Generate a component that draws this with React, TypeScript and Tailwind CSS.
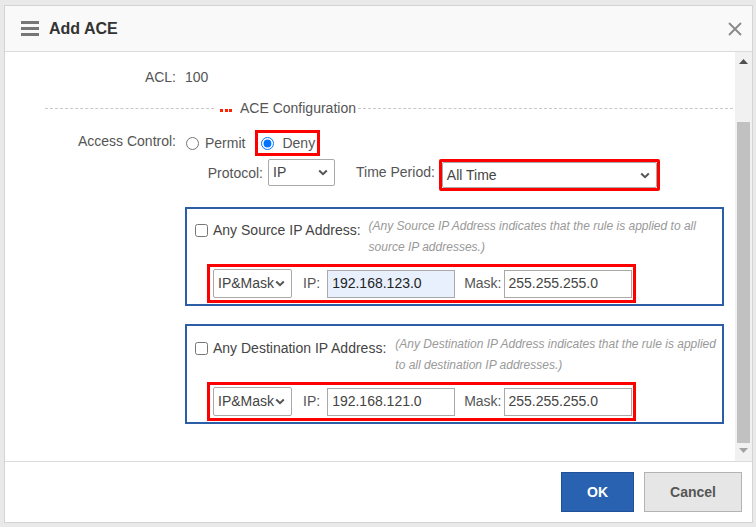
import React from "react";

const Chevron = () => (
  <svg width="10" height="7" viewBox="0 0 10 7" className="shrink-0">
    <path d="M1.2 1.5 L5 5.2 L8.8 1.5" fill="none" stroke="#555" strokeWidth="2" />
  </svg>
);

function FakeSelect({ value, className }: { value: string; className: string }) {
  return (
    <div
      className={
        "flex items-center justify-between border border-[#a9a9a9] rounded-[2px] bg-white pl-[4px] pr-[6px] text-[14px] text-[#444] " +
        className
      }
    >
      <span>{value}</span>
      <Chevron />
    </div>
  );
}

function IpBox({
  title,
  note1,
  note2,
  noteLeft,
  ip,
  autofill,
  shift,
}: {
  title: string;
  note1: string;
  note2: string;
  noteLeft: string;
  ip: string;
  autofill: boolean;
  shift: string;
}) {
  return (
    <div className={"ml-[180px] w-[539px] border-2 border-[#2c5ea8] " + shift}>
      <div className="flex items-start h-[49px]">
        <div className="flex items-center ml-[8px] mt-[11px] h-[20px]">
          <input
            type="checkbox"
            readOnly
            className="m-0 w-[13px] h-[13px] accent-[#0075ff]"
          />
          <span className="ml-[5px] text-[14px] text-[#444]">{title}</span>
        </div>
        <div
          className={
            "pt-[7px] text-[12px] leading-[21px] italic text-[#999] whitespace-nowrap " + noteLeft
          }
        >
          <div>{note1}</div>
          <div>{note2}</div>
        </div>
      </div>
      <div className="ml-[20px] mt-[6px] w-[429px] h-[39px] border-[3px] border-[#ff0000] flex items-center pl-[3px]">
        <FakeSelect value="IP&Mask" className="w-[79px] h-[29px]" />
        <span className="ml-[11px] text-[14px] text-[#555]">IP:</span>
        <div
          className={
            "ml-[7px] w-[128px] h-[28px] border border-[#a9a9a9] flex items-center pl-[4px] text-[14px] " +
            (autofill ? "bg-[#e8f0fe] text-[#222]" : "bg-white text-[#444]")
          }
        >
          {ip}
        </div>
        <span className="ml-[9px] text-[14px] text-[#555]">Mask:</span>
        <div className="ml-[3px] w-[128px] h-[28px] border border-[#a9a9a9] bg-white flex items-center pl-[3px] text-[14px] text-[#444]">
          255.255.255.0
        </div>
      </div>
    </div>
  );
}

export default function App() {
  return (
    <div
      className="w-[756px] h-[527px] bg-[#e9e9e9] pt-[5px] pl-[4px] overflow-hidden"
      style={{ fontFamily: '"Liberation Sans", Arial, sans-serif' }}
    >
      <div className="w-[749px] h-[518px] border border-[#d4d4d4] bg-white flex flex-col">
        {/* Header */}
        <div className="h-[46px] shrink-0 bg-[#f9f9f9] border-b border-[#dcdcdc] flex items-center pl-[16px] pr-[10px]">
          <div className="flex flex-col gap-[3px] w-[18px]">
            <div className="h-[3px] bg-[#777]" />
            <div className="h-[3px] bg-[#777]" />
            <div className="h-[3px] bg-[#777]" />
          </div>
          <div className="ml-[10px] text-[16px] font-bold text-[#333]">Add ACE</div>
          <div className="flex-1" />
          <svg width="14" height="14" viewBox="0 0 14 14">
            <path d="M1 1 L13 13 M13 1 L1 13" stroke="#888" strokeWidth="1.8" fill="none" />
          </svg>
        </div>

        {/* Body */}
        <div className="h-[409px] shrink-0 flex">
          <div className="flex-1 text-[14px] text-[#555]">
            <div className="flex items-center h-[20px] mt-[15px]">
              <div className="w-[171px] text-right">ACL:</div>
              <div className="ml-[9px]">100</div>
            </div>

            <div className="flex items-center h-[20px] mt-[11px] ml-[40px] mr-[2px]">
              <div className="w-[169px] border-t border-dashed border-[#c8c8c8]" />
              <div className="flex items-center gap-[1.5px] ml-[6px] mt-[4px]">
                <div className="w-[3px] h-[3px] bg-[#ff2200]" />
                <div className="w-[3px] h-[3px] bg-[#ff2200]" />
                <div className="w-[3px] h-[3px] bg-[#ff2200]" />
              </div>
              <div className="ml-[8px] text-[#555]">ACE Configuration</div>
              <div className="flex-1 ml-[2px] border-t border-dashed border-[#c8c8c8]" />
            </div>

            <div className="flex items-center h-[26px] mt-[12px]">
              <div className="w-[171px] text-right -mt-[3px]">Access Control:</div>
              <input type="radio" readOnly name="ac" className="ml-[10px] m-0 w-[13px] h-[13px]" />
              <span className="ml-[6px]">Permit</span>
              <div className="ml-[10px] h-[26px] w-[65px] border-[3px] border-[#ff0000] flex items-center pl-[3px]">
                <input
                  type="radio"
                  readOnly
                  checked
                  name="ac"
                  className="m-0 w-[13px] h-[13px] accent-[#0075ff]"
                />
                <span className="ml-[8px]">Deny</span>
              </div>
            </div>

            <div className="flex items-start mt-[3px]">
              <div className="w-[258px] text-right mt-[4px]">Protocol:</div>
              <FakeSelect value="IP" className="ml-[5px] w-[67px] h-[27px]" />
              <div className="ml-[21px] mt-[3px]">Time Period:</div>
              <div className="ml-[4px] w-[221px] h-[32px] border-[3px] border-[#ff0000] rounded-[2px]">
                <FakeSelect value="All Time" className="w-full h-full border-[#777] pl-[1px] pr-[4px]" />
              </div>
            </div>

            <IpBox
              shift="mt-[16px] h-[99px]"
              title="Any Source IP Address:"
              note1="(Any Source IP Address indicates that the rule is applied to all"
              note2="source IP addresses.)"
              noteLeft="ml-[8px]"
              ip="192.168.123.0"
              autofill
            />
            <IpBox
              shift="mt-[18px] h-[100px] pt-[1px]"
              title="Any Destination IP Address:"
              note1="(Any Destination IP Address indicates that the rule is applied"
              note2="to all destination IP addresses.)"
              noteLeft="ml-[9px]"
              ip="192.168.121.0"
              autofill={false}
            />
          </div>

          {/* Scrollbar */}
          <div className="w-[17px] bg-[#f1f1f1] flex flex-col items-center">
            <svg width="9" height="5" viewBox="0 0 9 5" className="mt-[7px]">
              <path d="M0 5 L4.5 0 L9 5 Z" fill="#505050" />
            </svg>
            <div className="mt-[58px] w-[13px] h-[321px] bg-[#c1c1c1]" />
            <svg width="9" height="5" viewBox="0 0 9 5" className="mt-[5px]">
              <path d="M0 0 L4.5 5 L9 0 Z" fill="#a3a3a3" />
            </svg>
          </div>
        </div>

        {/* Footer */}
        <div className="flex-1 border-t border-[#dcdcdc] flex items-start justify-end pt-[10px] pr-[10px]">
          <div className="w-[73px] h-[40px] bg-[#2862b0] border border-[#1f5299] flex items-center justify-center text-white font-bold text-[14px]">
            OK
          </div>
          <div className="ml-[10px] w-[98px] h-[40px] bg-[#e6e6e6] border border-[#b3b3b3] flex items-center justify-center text-[#555] font-bold text-[14px]">
            Cancel
          </div>
        </div>
      </div>
    </div>
  );
}
